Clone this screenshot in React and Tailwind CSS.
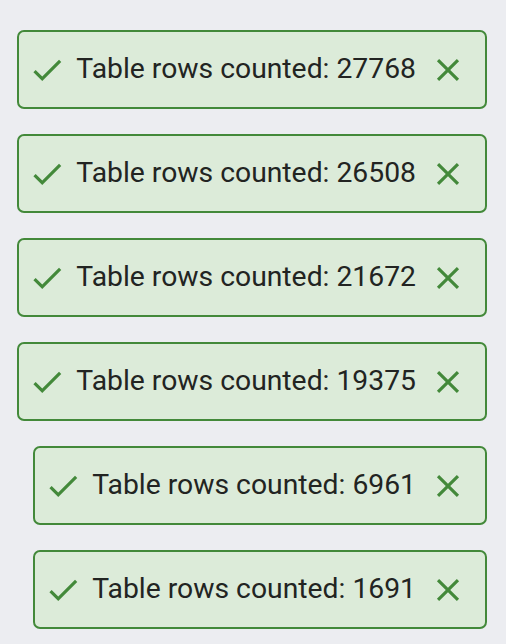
import React from 'react';

const counts = [27768, 26508, 21672, 19375, 6961, 1691];

function CheckIcon() {
  return (
    <svg width="38" height="38" viewBox="0 0 24 24" fill="#43893a" className="shrink-0">
      <path d="M9 16.17L4.83 12l-1.42 1.41L9 19 21 7l-1.41-1.41z" />
    </svg>
  );
}

function CloseIcon() {
  return (
    <svg width="38" height="38" viewBox="0 0 24 24" fill="#43893a">
      <path d="M19 6.41L17.59 5 12 10.59 6.41 5 5 6.41 10.59 12 5 17.59 6.41 19 12 13.41 17.59 19 19 17.59 13.41 12z" />
    </svg>
  );
}

function Toast({ count }) {
  return (
    <div className="flex items-center h-[79px] pl-[9px] pr-[18px] border-2 border-[#43893a] rounded-[7px] bg-[#dcebd9]">
      <CheckIcon />
      <span className="ml-[10px] text-[28.3px] text-[#222422] leading-none whitespace-nowrap">
        Table rows counted: {count}
      </span>
      <button className="ml-[13px] flex items-center">
        <CloseIcon />
      </button>
    </div>
  );
}

export default function App() {
  return (
    <div className="min-h-[644px] bg-[#ecedf1] pt-[30px] pr-[19px] flex flex-col items-end gap-[25px]" style={{ fontFamily: 'Roboto, sans-serif' }}>
      {counts.map(c => (
        <Toast key={c} count={c} />
      ))}
    </div>
  );
}
